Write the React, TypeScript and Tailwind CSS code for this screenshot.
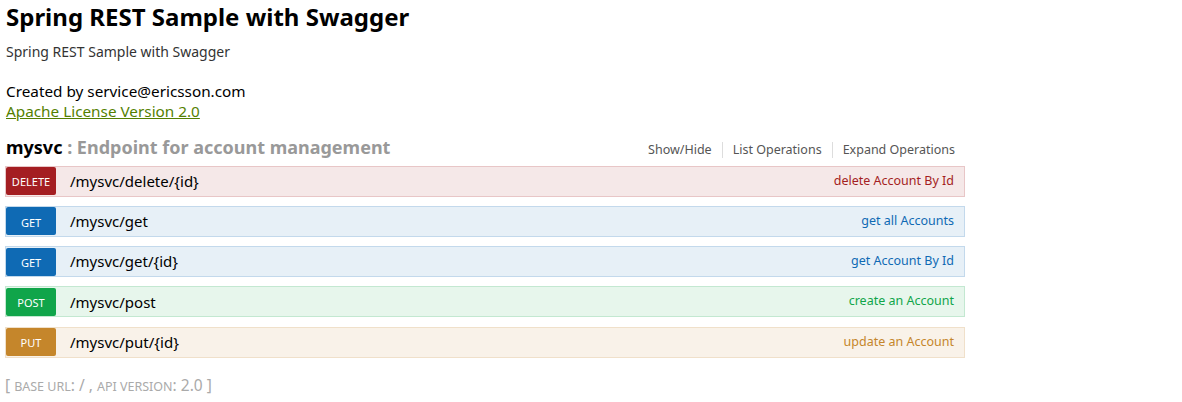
const ops = [
  { method: 'DELETE', path: '/mysvc/delete/{id}', summary: 'delete Account By Id', row: 'bg-[#f5e8e8] border-[#e8c6c7]', badge: 'bg-[#a41e22]', text: 'text-[#a41e22]' },
  { method: 'GET', path: '/mysvc/get', summary: 'get all Accounts', row: 'bg-[#e7f0f7] border-[#c3d9ec]', badge: 'bg-[#0f6ab4]', text: 'text-[#0f6ab4]' },
  { method: 'GET', path: '/mysvc/get/{id}', summary: 'get Account By Id', row: 'bg-[#e7f0f7] border-[#c3d9ec]', badge: 'bg-[#0f6ab4]', text: 'text-[#0f6ab4]' },
  { method: 'POST', path: '/mysvc/post', summary: 'create an Account', row: 'bg-[#e7f6ec] border-[#c3e8d1]', badge: 'bg-[#10a54a]', text: 'text-[#10a54a]' },
  { method: 'PUT', path: '/mysvc/put/{id}', summary: 'update an Account', row: 'bg-[#f9f2e9] border-[#f0e0ca]', badge: 'bg-[#c5862b]', text: 'text-[#c5862b]' },
]

function OperationRow({ op }: { op: (typeof ops)[number] }) {
  return (
    <div className={`flex items-center h-[31px] border ${op.row}`}>
      <span className={`flex items-center justify-center w-[50px] h-[28px] pt-[3px] rounded-[2px] text-[11px] text-white ${op.badge}`}>
        {op.method}
      </span>
      <span className="pl-[14px] text-[15px] text-black">{op.path}</span>
      <span className={`ml-auto pr-[10px] text-[12.5px] ${op.text}`}>{op.summary}</span>
    </div>
  )
}

export default function App() {
  return (
    <div className="min-h-screen bg-white text-[#333] px-[5px] font-['Noto_Sans','Open_Sans',sans-serif]">
      {/* Info */}
      <div className="pl-px">
        <h2 className="text-[24px] leading-[34px] font-bold text-black">Spring REST Sample with Swagger</h2>
        <div className="mt-[8px] text-[14px] leading-[20px] text-[#333]">Spring REST Sample with Swagger</div>
        <div className="mt-[18.5px] text-[15.3px] leading-[20.5px] text-black">Created by service@ericsson.com</div>
        <a href="#" className="block text-[15.3px] leading-[20.5px] text-[#547f00] underline">Apache License Version 2.0</a>
      </div>

      {/* Resource */}
      <div className="w-[960px] mt-[13px]">
        <div className="flex items-baseline h-[24px] pl-px">
          <h2 className="text-[18px] leading-[24px] font-bold text-black">
            mysvc <span className="text-[#999]">: Endpoint for account management</span>
          </h2>
          <ul className="ml-auto flex items-baseline text-[12.5px] text-[#555]">
            <li className="px-[10px] border-r border-[#ddd] leading-[16px]">Show/Hide</li>
            <li className="px-[10px] border-r border-[#ddd] leading-[16px]">List Operations</li>
            <li className="px-[10px] leading-[16px]">Expand Operations</li>
          </ul>
        </div>
        <div className="mt-[7px] flex flex-col gap-[9.25px]">
          {ops.map((op, i) => (
            <OperationRow key={i} op={op} />
          ))}
        </div>
      </div>

      {/* Footer */}
      <div className="mt-[17px] text-[15.5px] leading-[20px] text-[#aaa]">
        [ <span className="text-[12.5px]">BASE URL</span>: / , <span className="text-[12.5px]">API VERSION</span>: 2.0 ]
      </div>
    </div>
  )
}
